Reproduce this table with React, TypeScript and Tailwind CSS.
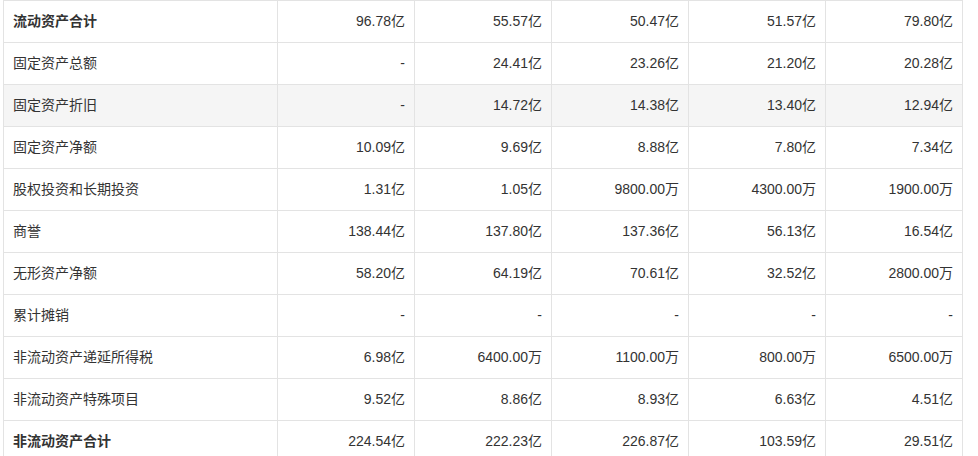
const rows: { label: string; values: string[]; bold?: boolean; shaded?: boolean }[] = [
  { label: "流动资产合计", values: ["96.78亿", "55.57亿", "50.47亿", "51.57亿", "79.80亿"], bold: true },
  { label: "固定资产总额", values: ["-", "24.41亿", "23.26亿", "21.20亿", "20.28亿"] },
  { label: "固定资产折旧", values: ["-", "14.72亿", "14.38亿", "13.40亿", "12.94亿"], shaded: true },
  { label: "固定资产净额", values: ["10.09亿", "9.69亿", "8.88亿", "7.80亿", "7.34亿"] },
  { label: "股权投资和长期投资", values: ["1.31亿", "1.05亿", "9800.00万", "4300.00万", "1900.00万"] },
  { label: "商誉", values: ["138.44亿", "137.80亿", "137.36亿", "56.13亿", "16.54亿"] },
  { label: "无形资产净额", values: ["58.20亿", "64.19亿", "70.61亿", "32.52亿", "2800.00万"] },
  { label: "累计摊销", values: ["-", "-", "-", "-", "-"] },
  { label: "非流动资产递延所得税", values: ["6.98亿", "6400.00万", "1100.00万", "800.00万", "6500.00万"] },
  { label: "非流动资产特殊项目", values: ["9.52亿", "8.86亿", "8.93亿", "6.63亿", "4.51亿"] },
  { label: "非流动资产合计", values: ["224.54亿", "222.23亿", "226.87亿", "103.59亿", "29.51亿"], bold: true },
];

export default function App() {
  return (
    <div className="h-[456px] w-[978px] overflow-hidden bg-white pl-[3px]">
      <table
        className="w-[960px] table-fixed border-collapse text-[14px] text-[#333]"
        style={{ fontFamily: '"Liberation Sans", Arial, "Noto Sans CJK SC", sans-serif' }}
      >
        <colgroup>
          <col className="w-[274px]" />
          <col className="w-[137px]" />
          <col className="w-[137px]" />
          <col className="w-[137px]" />
          <col className="w-[137px]" />
          <col className="w-[137px]" />
        </colgroup>
        <tbody>
          {rows.map((row) => (
            <tr key={row.label} className={row.shaded ? "bg-[#f5f5f5]" : "bg-white"}>
              <td
                className={
                  row.bold
                    ? "h-[42px] border border-[#e3e3e3] px-[9px] text-left font-bold"
                    : "h-[42px] border border-[#e3e3e3] px-[9px] text-left"
                }
              >
                {row.label}
              </td>
              {row.values.map((value, i) => (
                <td key={i} className="h-[42px] border border-[#e3e3e3] px-[9px] text-right">
                  {value}
                </td>
              ))}
            </tr>
          ))}
        </tbody>
      </table>
    </div>
  );
}
